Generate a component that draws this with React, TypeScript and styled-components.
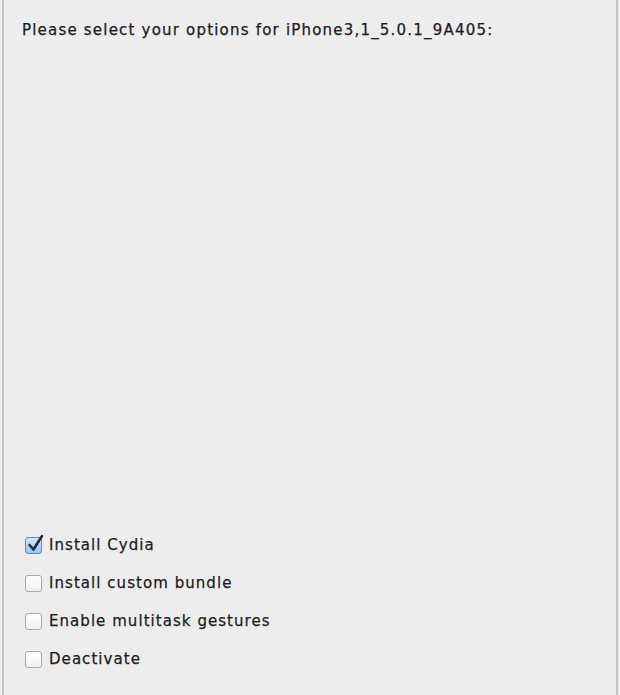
import styled, { createGlobalStyle } from 'styled-components';

const GlobalStyle = createGlobalStyle`
  html, body {
    margin: 0;
    padding: 0;
    background: #ececec;
  }
`;

const _Panel = styled.div`
  box-sizing: border-box;
  width: 616px;
  height: 695px;
  margin-left: 2px;
  background: #ededed;
  border-left: 2px solid #c4c4c4;
  border-right: 2px solid #c4c4c4;
  display: flex;
  flex-direction: column;
  justify-content: space-between;
  padding: 21px 0 27px 18px;
  font-family: 'DejaVu Sans', 'Liberation Sans', sans-serif;
  color: #1c1c1c;
  -webkit-text-stroke: 0.25px #1c1c1c;
`;

const _Title = styled.div`
  font-size: 15px;
  letter-spacing: 1.2px;
`;

const _Options = styled.div`
  display: flex;
  flex-direction: column;
  gap: 20px;
  padding-left: 3px;
`;

const _Row = styled.label`
  display: flex;
  align-items: center;
  gap: 7px;
  font-size: 15px;
  letter-spacing: 1.05px;
  height: 18px;
`;

const _Box = styled.span<{ $checked?: boolean }>`
  position: relative;
  box-sizing: border-box;
  flex: none;
  width: 17px;
  height: 17px;
  border: 1px solid #a8a8a8;
  border-radius: 3px;
  -webkit-text-stroke: 0;
  background: ${(p) =>
    p.$checked
      ? 'linear-gradient(#d6e6fb, #9fc3f0)'
      : 'linear-gradient(#ffffff, #f0f0f0)'};
  border-color: ${(p) => (p.$checked ? '#6b88b0' : '#a8a8a8')};
`;

const _Tick = styled.svg`
  position: absolute;
  left: 1px;
  top: -4px;
`;

const options = [
  { label: 'Install Cydia', checked: true },
  { label: 'Install custom bundle', checked: false },
  { label: 'Enable multitask gestures', checked: false },
  { label: 'Deactivate', checked: false },
];

export default function App() {
  return (
    <>
      <GlobalStyle />
      <_Panel>
        <_Title>Please select your options for iPhone3,1_5.0.1_9A405:</_Title>
        <_Options>
          {options.map((o) => (
            <_Row key={o.label}>
              <_Box $checked={o.checked}>
                {o.checked && (
                  <_Tick width="17" height="19" viewBox="0 0 17 19">
                    <path
                      d="M2.5 11 L6.5 15.5 L15 2"
                      fill="none"
                      stroke="#1d2c40"
                      strokeWidth="2.6"
                      strokeLinecap="round"
                      strokeLinejoin="round"
                    />
                  </_Tick>
                )}
              </_Box>
              {o.label}
            </_Row>
          ))}
        </_Options>
      </_Panel>
    </>
  );
}
